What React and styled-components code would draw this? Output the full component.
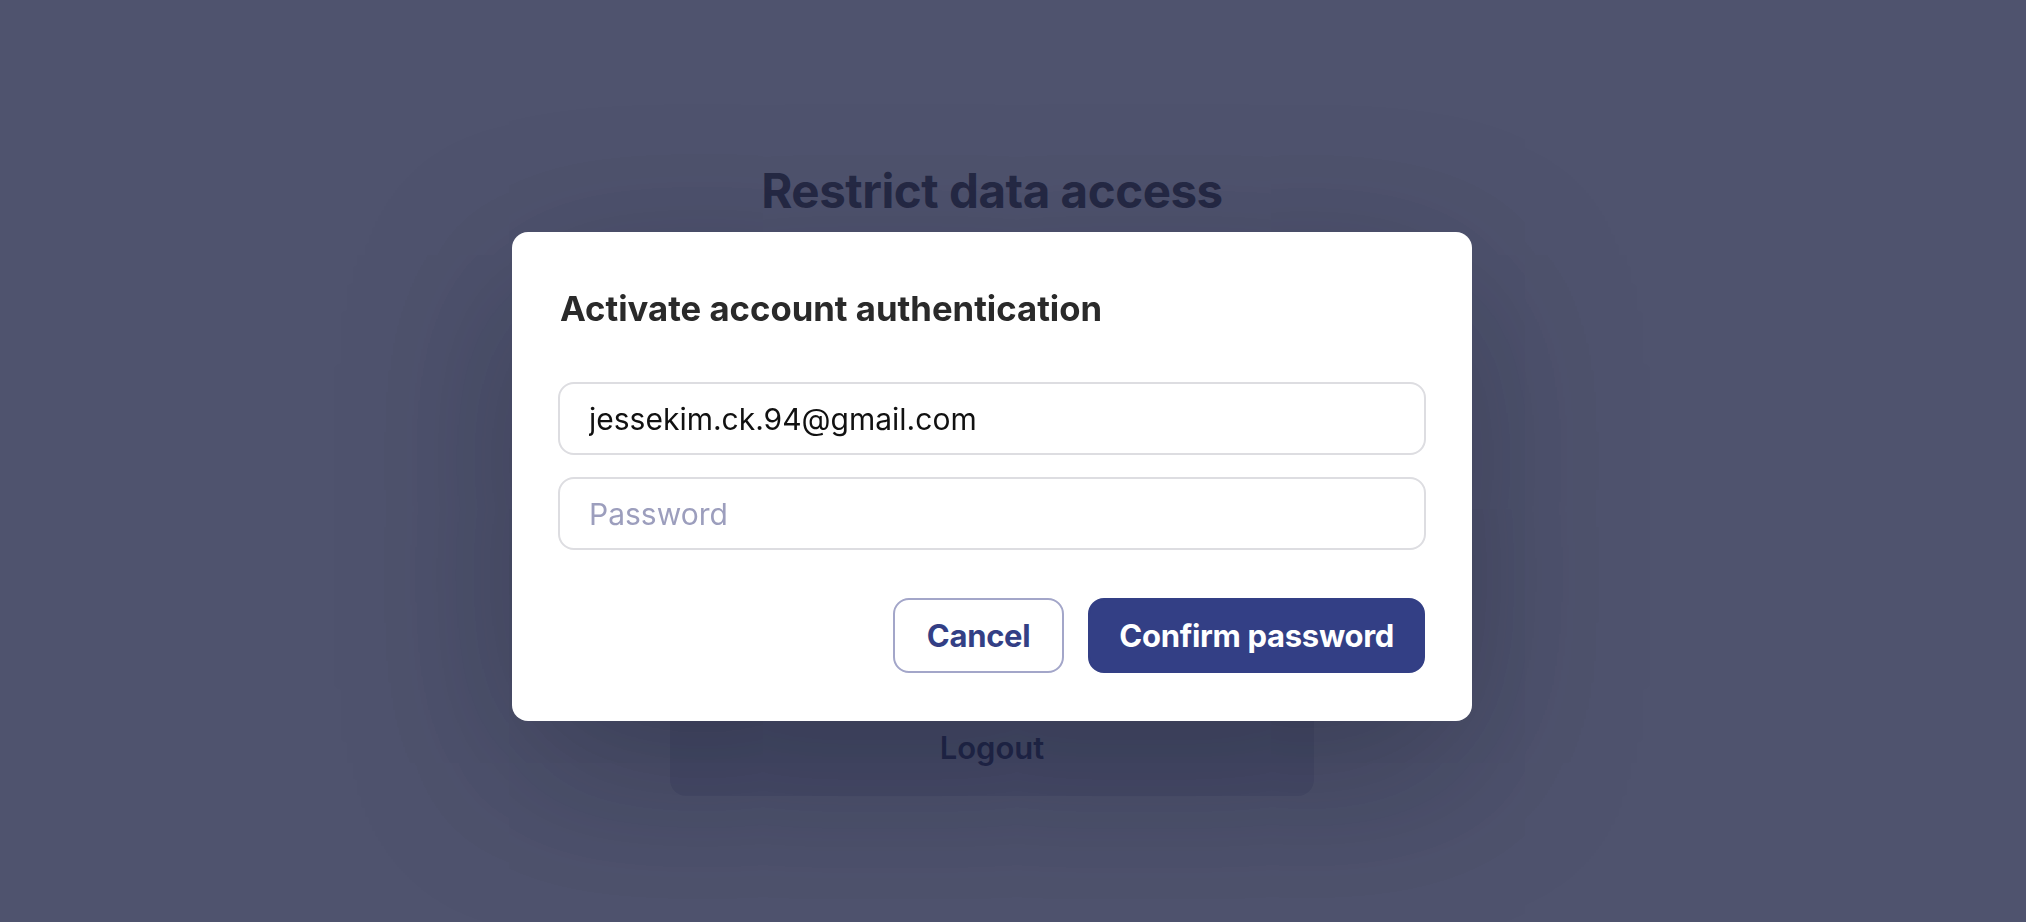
import React from "react";
import styled, { createGlobalStyle } from "styled-components";

const GlobalStyle = createGlobalStyle`
  html, body {
    margin: 0;
    padding: 0;
    background: #ffffff;
    font-family: Inter, "Noto Sans", sans-serif;
  }
  * { box-sizing: border-box; }
`;

const Page = styled.div`
  min-height: 100vh;
  display: flex;
  flex-direction: column;
  align-items: center;
  padding: 163px 42px 0 0;
`;

const Heading = styled.h1`
  margin: 0 0 40px;
  font-size: 47.5px;
  line-height: 55px;
  font-weight: 700;
  letter-spacing: -0.01em;
  color: #303030;
`;

const Stack = styled.div`
  width: 644px;
  display: flex;
  flex-direction: column;
  gap: 12px;
`;

const SettingRow = styled.div`
  height: 98px;
  border-radius: 16px;
  background: #dcdde6;
  display: flex;
  align-items: center;
  justify-content: center;
  font-size: 31px;
  font-weight: 600;
  color: #22264e;
`;

const Overlay = styled.div`
  position: fixed;
  inset: 0;
  background: rgba(35, 40, 74, 0.8);
  display: flex;
  justify-content: center;
  align-items: flex-start;
  padding: 232px 42px 0 0;
`;

const Dialog = styled.div`
  width: 960px;
  padding: 48px 46px;
  background: #ffffff;
  border-radius: 16px;
  box-shadow: 0 50px 170px rgba(10, 12, 30, 0.32);
  display: flex;
  flex-direction: column;
`;

const DialogTitle = styled.h2`
  margin: 0 0 46px 2px;
  font-size: 34.7px;
  line-height: 56px;
  font-weight: 700;
  color: #2a2a2a;
`;

const Fields = styled.div`
  display: flex;
  flex-direction: column;
  gap: 22px;
`;

const Field = styled.input`
  height: 73px;
  width: 100%;
  padding: 0 29px;
  border: 2px solid #dddde1;
  border-radius: 16px;
  font-family: Inter, "Noto Sans", sans-serif;
  font-size: 30px;
  color: #111111;
  background: #ffffff;
  outline: none;

  &::placeholder {
    color: #9c9ebd;
  }
`;

const Actions = styled.div`
  margin-top: 48px;
  display: flex;
  justify-content: flex-end;
  gap: 24px;
  padding-right: 1px;
`;

const Button = styled.button`
  height: 75px;
  padding: 0 ${(p) => (p.$primary ? "29px" : "32px")};
  border-radius: 16px;
  font-family: Inter, "Noto Sans", sans-serif;
  font-size: 31px;
  font-weight: 700;
  letter-spacing: -0.01em;
  cursor: pointer;
  border: 2px solid ${(p) => (p.$primary ? "#333f85" : "#a3a6c9")};
  background: ${(p) => (p.$primary ? "#333f85" : "#ffffff")};
  color: ${(p) => (p.$primary ? "#ffffff" : "#333f85")};
`;

export default function App() {
  return (
    <>
      <GlobalStyle />
      <Page>
        <Heading>Restrict data access</Heading>
        <Stack>
          <SettingRow />
          <SettingRow />
          <SettingRow />
          <SettingRow />
          <SettingRow>Logout</SettingRow>
        </Stack>
      </Page>
      <Overlay>
        <Dialog>
          <DialogTitle>Activate account authentication</DialogTitle>
          <Fields>
            <Field type="email" defaultValue="jessekim.ck.94@gmail.com" />
            <Field type="password" placeholder="Password" />
          </Fields>
          <Actions>
            <Button>Cancel</Button>
            <Button $primary>Confirm password</Button>
          </Actions>
        </Dialog>
      </Overlay>
    </>
  );
}
